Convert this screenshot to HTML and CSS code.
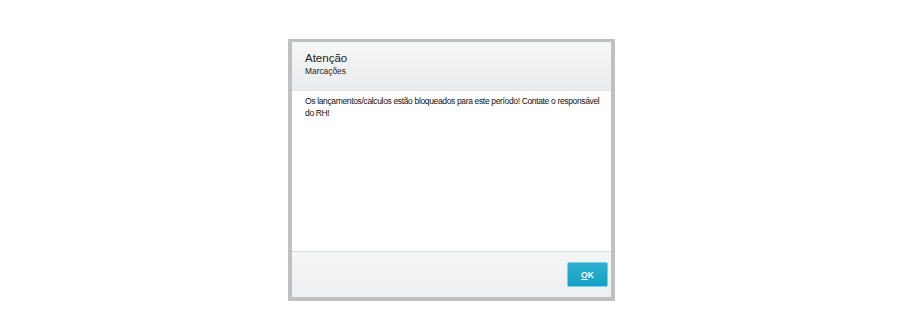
FILE: index.html
```html
<!DOCTYPE html>
<html lang="pt">
<head>
<meta charset="utf-8">
<link rel="stylesheet" href="styles.css">
</head>
<body>
<div class="stage">
  <div class="dialog">
    <div class="header">
      <div class="title">Atenção</div>
      <div class="subtitle">Marcações</div>
    </div>
    <div class="content">
      Os lançamentos/calculos estão bloqueados para este período! Contate o responsável do RH!
    </div>
    <div class="footer">
      <button class="btn"><span class="u">O</span>K</button>
    </div>
  </div>
</div>
</body>
</html>
```
FILE: styles.css
```css
html, body {
  margin: 0;
  padding: 0;
  background: #ffffff;
  font-family: "Liberation Sans", Arial, sans-serif;
}
.stage {
  padding-top: 39px;
  padding-left: 288px;
}
.dialog {
  width: 319px;
  height: 255px;
  border: 4px solid #c0c0c0;
  border-top-width: 3px;
  display: flex;
  flex-direction: column;
  background: #fff;
}
.header {
  height: 49px;
  flex: none;
  background: linear-gradient(#f6f7f7, #eaebec);
  border-bottom: 1px solid #e3e3e3;
  padding: 9px 0 0 13px;
  box-sizing: border-box;
}
.title {
  font-size: 11.5px;
  color: #222;
  line-height: 14px;
}
.subtitle {
  font-size: 8.4px;
  color: #222;
  line-height: 12px;
}
.content {
  flex: 1;
  padding: 5px 3px 0 13px;
  font-size: 8.5px;
  letter-spacing: -0.35px;
  line-height: 11.5px;
  color: #111;
}
.footer {
  height: 46px;
  flex: none;
  border-top: 1px solid #d9d9d9;
  background: linear-gradient(#f4f5f5, #eeeff0);
  display: flex;
  justify-content: flex-end;
  align-items: flex-start;
  padding: 10px 3px 0 0;
  box-sizing: border-box;
}
.btn {
  width: 41px;
  height: 25px;
  border: 1px solid #7ad0e8;
  border-radius: 2px;
  background: linear-gradient(#30b0d0, #14a0c5);
  color: #fff;
  font-family: "Liberation Sans", Arial, sans-serif;
  font-size: 8.5px;
  font-weight: bold;
  padding: 0;
}
.u {
  text-decoration: underline;
}
```
